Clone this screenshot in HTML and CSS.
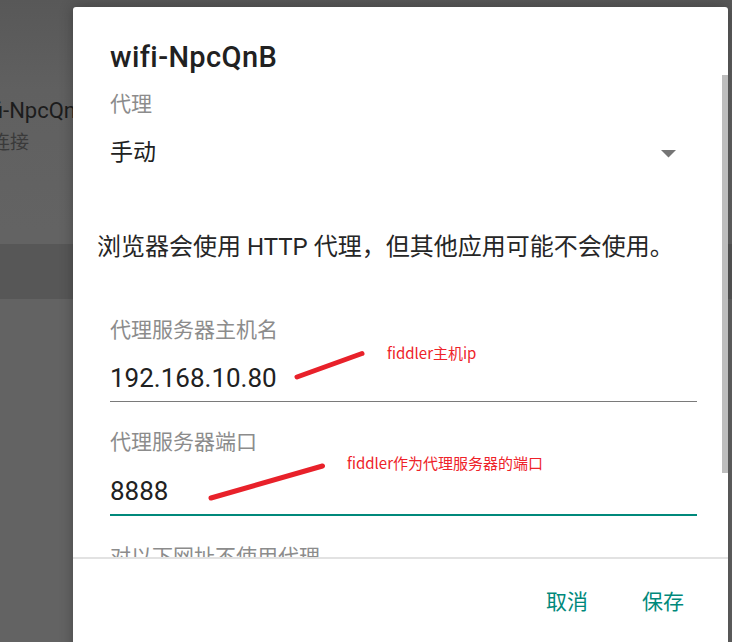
FILE: index.html
```html
<!DOCTYPE html>
<html lang="zh-CN">
<head>
<meta charset="utf-8">
<title>代理设置</title>
<link rel="stylesheet" href="styles.css">
</head>
<body>
<div class="page">
  <div class="page-top"></div>
  <div class="net-item">
    <div class="net-name">wifi-NpcQnB</div>
    <div class="net-status">已连接</div>
  </div>
  <div class="band"></div>
  <div class="page-fill"></div>
  <div class="page-foot">已保存的网络</div>
</div>

<div class="dialog">
  <div class="dialog-body">
    <h1 class="title">wifi-NpcQnB</h1>
    <div class="label first">代理</div>
    <div class="select">
      <span class="select-value">手动</span>
      <svg class="caret" width="15" height="8" viewBox="0 0 15 8"><path d="M0 0H15L7.5 7.5Z" fill="#757575"/></svg>
    </div>
    <p class="note">浏览器会使用 HTTP 代理，但其他应用可能不会使用。</p>
    <div class="label l-host">代理服务器主机名</div>
    <div class="input">192.168.10.80</div>
    <div class="label l-port">代理服务器端口</div>
    <div class="input focused">8888</div>
    <div class="label l-bypass">对以下网址不使用代理</div>
  </div>
  <div class="dialog-actions">
    <span class="btn">取消</span>
    <span class="btn">保存</span>
  </div>
  <div class="scrollbar"></div>
</div>

<svg class="marks" width="732" height="642" viewBox="0 0 732 642">
  <line x1="297" y1="377" x2="362" y2="353.5" stroke="#e8212a" stroke-width="5" stroke-linecap="round"/>
  <line x1="211" y1="498" x2="322.5" y2="466" stroke="#e8212a" stroke-width="5" stroke-linecap="round"/>
</svg>
<div class="note-red n1">fiddler主机ip</div>
<div class="note-red n2">fiddler作为代理服务器的端口</div>
</body>
</html>
```

FILE: styles.css
```css
html, body {
  margin: 0;
  padding: 0;
  width: 732px;
  height: 642px;
  overflow: hidden;
}

body {
  position: relative;
  font-family: Roboto, "Noto Sans CJK SC", sans-serif;
  background: #626262;
}

.page {
  display: flex;
  flex-direction: column;
  height: 642px;
  background: linear-gradient(#585858 0, #606060 90px, #636363 230px);
}

.page-top {
  height: 97px;
}

.net-item {
  display: flex;
  flex-direction: column;
  margin-left: -31px;
}

.net-name {
  font-size: 22px;
  line-height: 28px;
  color: #1c1c1c;
}

.net-status {
  font-size: 19px;
  line-height: 28px;
  margin-top: 4px;
  margin-left: 3px;
  color: #3a3a3a;
}

.band {
  margin-top: 87px;
  height: 55px;
  background: #575757;
}

.page-fill {
  flex: 1;
}

.page-foot {
  font-size: 19px;
  line-height: 24px;
  color: #2a2a2a;
  margin-bottom: -23px;
  padding-left: 2px;
}

.dialog {
  position: absolute;
  left: 73px;
  top: 7px;
  width: 655px;
  height: 660px;
  background: #fff;
  border-radius: 3px;
  box-shadow: 0 0 14px rgba(0, 0, 0, 0.28);
  display: flex;
  flex-direction: column;
}

.dialog-body {
  height: 550px;
  overflow: hidden;
  padding: 34px 31px 0 37px;
  box-sizing: border-box;
  display: flex;
  flex-direction: column;
}

.title {
  margin: 0;
  font-size: 29px;
  line-height: 32px;
  font-weight: 500;
  letter-spacing: 0.4px;
  color: #212121;
}

.label {
  font-size: 21px;
  line-height: 28px;
  color: #8c8c8c;
}

.label.first {
  margin-top: 17px;
}

.select {
  margin-top: 19px;
  margin-right: 21px;
  display: flex;
  align-items: center;
  justify-content: space-between;
  height: 32px;
}

.select-value {
  font-size: 23px;
  line-height: 32px;
  color: #212121;
}

.caret {
  display: block;
  margin-top: 2px;
}

.note {
  margin: 62px 0 0 -13px;
  font-size: 24px;
  line-height: 32px;
  color: #262626;
}

.l-host {
  margin-top: 53px;
}

.input {
  margin-top: 16px;
  font-size: 26px;
  line-height: 36px;
  color: #212121;
  padding-bottom: 5px;
  border-bottom: 1px solid #7a7a7a;
}

.input.focused {
  border-bottom: 2px solid #00897b;
}

.l-port {
  margin-top: 26px;
}

.input.focused {
  margin-top: 17px;
}

.l-bypass {
  margin-top: 27px;
}

.dialog-actions {
  border-top: 2px solid #e2e2e2;
  display: flex;
  justify-content: flex-end;
  gap: 54px;
  padding: 29px 44px 0 0;
}

.btn {
  font-size: 21px;
  line-height: 28px;
  color: #00897b;
}

.scrollbar {
  position: absolute;
  right: 0;
  top: 68px;
  width: 6px;
  height: 398px;
  background: #bdbdbd;
}

.marks {
  position: absolute;
  left: 0;
  top: 0;
  pointer-events: none;
}

.note-red {
  position: absolute;
  font-family: "Noto Sans CJK SC", sans-serif;
  font-size: 15px;
  line-height: 20px;
  color: #ee2229;
  white-space: nowrap;
}

.n1 {
  left: 387px;
  top: 343px;
}

.n2 {
  left: 347px;
  top: 453px;
}
```
